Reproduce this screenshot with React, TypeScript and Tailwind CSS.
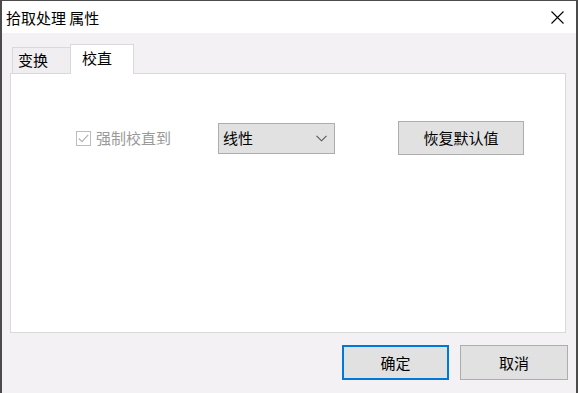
import { useState } from "react";

const font = { fontFamily: '"Noto Sans CJK SC", "Noto Sans", sans-serif' };

function CloseIcon() {
  return (
    <svg width="13" height="13" viewBox="0 0 13 13" className="text-black">
      <path d="M0.5 0.5 L12.5 12.5 M12.5 0.5 L0.5 12.5" stroke="currentColor" strokeWidth="1.1" fill="none" />
    </svg>
  );
}

function Chevron() {
  return (
    <svg width="11" height="7" viewBox="0 0 11 7" className="text-[#555]">
      <path d="M0.5 0.8 L5.5 5.8 L10.5 0.8" stroke="currentColor" strokeWidth="1.1" fill="none" />
    </svg>
  );
}

export default function App() {
  const [tab, setTab] = useState("校直");

  return (
    <div
      style={font}
      className="flex h-[393px] w-[578px] flex-col overflow-hidden border-x-2 border-t border-[#4b4b4b] bg-[#f4f1f4] text-[15px] text-black"
    >
      <div className="flex h-[32px] shrink-0 items-center justify-between bg-white pl-[4px] pr-[12px]">
        <span className="leading-none">拾取处理 属性</span>
        <CloseIcon />
      </div>

      <div className="flex flex-1 flex-col px-[8px] pt-[11px]">
        <div className="flex items-end pl-[2px]">
          {["变换", "校直"].map((t) =>
            t === tab ? (
              <button
                key={t}
                onClick={() => setTab(t)}
                className="relative z-10 -mb-px flex h-[30px] w-[64px] items-start border border-b-0 border-[#d9d9d9] bg-white pl-[11px] pt-[3px] leading-5"
              >
                {t}
              </button>
            ) : (
              <button
                key={t}
                onClick={() => setTab(t)}
                className="flex h-[26px] w-[58px] items-start border border-r-0 border-b-0 border-[#d9d9d9] bg-[#f0eef0] pl-[5px] pt-[2px] leading-5"
              >
                {t}
              </button>
            )
          )}
        </div>

        <div className="h-[260px] w-[556px] border border-[#d9d9d9] bg-white pt-[47px]">
          <div className="flex items-center">
            <label className="ml-[65px] flex items-center gap-[5px] text-[#9a9a9a]">
              <span className="flex h-[15px] w-[15px] items-center justify-center border border-[#bcbcbc] bg-white">
                <svg width="11" height="9" viewBox="0 0 11 9">
                  <path d="M0.8 4.5 L4 7.6 L10.2 0.8" stroke="#b3b3b3" strokeWidth="1.2" fill="none" />
                </svg>
              </span>
              <span className="leading-5">强制校直到</span>
            </label>

            <div className="ml-[47px] flex h-[31px] w-[117px] items-center justify-between border border-[#adadad] bg-[#e1e1e1] pl-[4px] pr-[7px]">
              <span className="leading-5">线性</span>
              <Chevron />
            </div>

            <button className="ml-[63px] flex h-[34px] w-[126px] items-center justify-center border border-[#adadad] bg-[#e1e1e1] leading-5">
              恢复默认值
            </button>
          </div>
        </div>

        <div className="flex justify-end gap-[11px] pt-[12px]">
          <button className="flex h-[35px] w-[107px] items-center justify-center border-2 border-[#0078d7] bg-[#e1e1e1] leading-5">
            确定
          </button>
          <button className="flex h-[35px] w-[108px] items-center justify-center border border-[#adadad] bg-[#e1e1e1] leading-5">
            取消
          </button>
        </div>
      </div>
    </div>
  );
}
